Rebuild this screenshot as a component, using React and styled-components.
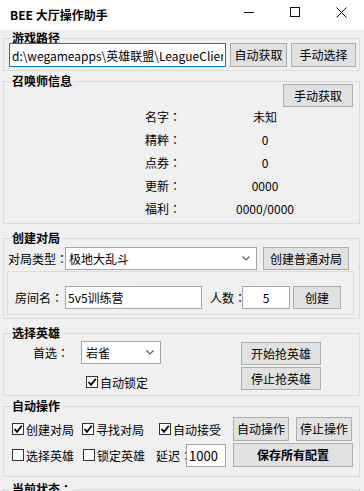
import React from 'react';
import styled, { createGlobalStyle } from 'styled-components';

const GlobalStyle = createGlobalStyle`
  html, body {
    margin: 0;
    padding: 0;
    background: #f0f0f0;
  }
  body {
    font-family: "Noto Sans CJK SC", "Noto Sans", sans-serif;
    font-size: 12px;
    color: #000;
    overflow: hidden;
  }
  * { box-sizing: border-box; }
`;

const Window = styled.div`
  width: 364px;
  height: 491px;
  overflow: hidden;
  background: #f0f0f0;
  display: flex;
  flex-direction: column;
`;

const TitleBar = styled.div`
  flex: 0 0 30px;
  height: 30px;
  background: #fff;
  display: flex;
`;

const Title = styled.div`
  flex: 1;
  padding-left: 10px;
  font-weight: bold;
  font-size: 12px;
  line-height: 30px;
`;

const Caption = styled.div`
  width: 46px;
  height: 30px;
  display: flex;
  justify-content: center;
  padding-top: 7px;
`;

const Body = styled.div`
  display: flex;
  flex-direction: column;
  padding: 0 4px 0 3px;
`;

const Group = styled.fieldset`
  margin: ${p => p.$mt}px 0 0;
  padding: 0;
  border: 1px solid #dcdcdc;
  min-width: 0;
`;

const Legend = styled.legend`
  margin-left: 6px;
  padding: 0 2px;
  height: 6px;
  line-height: 6px;
  font-size: 12px;
  font-weight: bold;
  white-space: nowrap;
`;

const Row = styled.div`
  display: flex;
  align-items: center;
  gap: ${p => p.$gap || 0}px;
  padding: ${p => p.$pad || '0'};
  justify-content: ${p => (p.$end ? 'flex-end' : 'flex-start')};
`;

const Button = styled.button`
  flex: 0 0 auto;
  width: ${p => p.$w}px;
  height: ${p => p.$h || 23}px;
  padding: 0;
  margin: 0 0 0 ${p => p.$ml || 0}px;
  background: #e1e1e1;
  border: 1px solid #adadad;
  border-radius: 0;
  font-family: inherit;
  font-size: 12px;
  font-weight: ${p => (p.$bold ? 'bold' : 'normal')};
  color: #000;
  line-height: 1;
`;

const TextBox = styled.input`
  flex: 0 0 auto;
  width: ${p => p.$w}px;
  height: ${p => p.$h || 23}px;
  margin: 0;
  padding: 0 2px;
  background: #fff;
  border: 1px solid ${p => (p.$focus ? '#0078d7' : '#a5a5a5')};
  border-radius: 0;
  outline: none;
  font-family: inherit;
  font-size: ${p => p.$fs || 12}px;
  color: #000;
  text-align: ${p => (p.$center ? 'center' : 'left')};
`;

const Combo = styled.div`
  flex: 0 0 auto;
  width: ${p => p.$w}px;
  height: 23px;
  background: #fff;
  border: 1px solid #a5a5a5;
  display: flex;
  align-items: center;
  justify-content: space-between;
  padding: 0 6px 0 ${p => p.$pl || 3}px;
  font-size: 12px;
`;

const FieldLabel = styled.span`
  flex: 0 0 auto;
  width: ${p => p.$w}px;
  margin-left: ${p => p.$ml || 0}px;
  white-space: nowrap;
  overflow: visible;
`;

/* full-width colon drawn centred in its em box, as in the original UI font */
const Colon = styled.span`
  font-family: "Noto Sans CJK JP", "Noto Sans CJK SC", sans-serif;
`;

const InfoList = styled.div`
  display: grid;
  grid-template-columns: 60px 120px;
  grid-auto-rows: 23px;
  align-items: center;
  margin-top: -2px;
  padding: 0 0 3px 141px;
`;

const InfoValue = styled.span`
  text-align: center;
`;

const Panel = styled.div`
  margin: 1px 0 3px 3px;
  width: 347px;
  height: 44px;
  border: 1px solid #dcdcdc;
  display: flex;
  align-items: center;
  padding: 13px 0 4px 7px;
`;

const Split = styled.div`
  display: flex;
  align-items: flex-start;
  padding: 5px 0 5px 0;
`;

const LeftCol = styled.div`
  width: 237px;
  display: flex;
  flex-direction: column;
`;

const RightCol = styled.div`
  display: flex;
  flex-direction: column;
  gap: 2px;
  margin-top: 1px;
`;

const AutoGrid = styled.div`
  display: grid;
  grid-template-columns: 70px 76px 75px 120px;
  grid-template-rows: 24px 24px;
  row-gap: 2px;
  align-items: center;
  padding: 8px 0 9px 8px;
`;

const CheckLabel = styled.label`
  display: flex;
  align-items: center;
  gap: 2px;
  height: 16px;
  white-space: nowrap;
  margin: ${p => p.$m || '0'};
`;

const Box = styled.span`
  width: 12px;
  height: 12px;
  flex: 0 0 12px;
  background: #fff;
  border: 1px solid #333;
  display: flex;
  align-items: center;
  justify-content: center;
`;

const Status = styled.div`
  height: 40px;
`;

const Chevron = () => (
  <svg width="8" height="5" viewBox="0 0 8 5">
    <path d="M0.5 0.5 L4 4 L7.5 0.5" fill="none" stroke="#606060" strokeWidth="1.2" />
  </svg>
);

const Check = ({ checked, children, m }) => (
  <CheckLabel $m={m}>
    <Box>
      {checked && (
        <svg width="10" height="10" viewBox="0 0 10 10">
          <path d="M1.5 5 L4 7.8 L8.8 1.8" fill="none" stroke="#000" strokeWidth="1.8" />
        </svg>
      )}
    </Box>
    {children}
  </CheckLabel>
);

const Label = ({ text, w, ml }) => (
  <FieldLabel $w={w} $ml={ml}>
    {text}
    <Colon>：</Colon>
  </FieldLabel>
);

const info = [
  ['名字', '未知'],
  ['精粹', '0'],
  ['点券', '0'],
  ['更新', '0000'],
  ['福利', '0000/0000'],
];

export default function App() {
  return (
    <Window>
      <GlobalStyle />
      <TitleBar>
        <Title>BEE 大厅操作助手</Title>
        <Caption>
          <svg width="10" height="10" viewBox="0 0 10 10">
            <path d="M0 5.5 H10" stroke="#111" strokeWidth="1" />
          </svg>
        </Caption>
        <Caption>
          <svg width="10" height="10" viewBox="0 0 10 10">
            <rect x="0.5" y="0.5" width="9" height="9" fill="none" stroke="#111" strokeWidth="1" />
          </svg>
        </Caption>
        <Caption>
          <svg width="11" height="11" viewBox="0 0 11 11">
            <path d="M0.5 0.5 L10.5 10.5 M10.5 0.5 L0.5 10.5" stroke="#111" strokeWidth="1" />
          </svg>
        </Caption>
      </TitleBar>

      <Body>
        <Group $mt={5}>
          <Legend>游戏路径</Legend>
          <Row $gap={4} $pad="2px 0 3px 5px">
            <TextBox $w={217} $h={24} $focus readOnly defaultValue="d:\wegameapps\英雄联盟\LeagueClient" />
            <Button $w={57} $h={24}>自动获取</Button>
            <Button $w={65} $h={24}>手动选择</Button>
          </Row>
        </Group>

        <Group $mt={7}>
          <Legend>召唤师信息</Legend>
          <Row $end $pad="0 6px 0 0">
            <Button $w={70}>手动获取</Button>
          </Row>
          <InfoList>
            {info.map(([k, v]) => (
              <React.Fragment key={k}>
                <span>
                  {k}
                  <Colon>：</Colon>
                </span>
                <InfoValue>{v}</InfoValue>
              </React.Fragment>
            ))}
          </InfoList>
        </Group>

        <Group $mt={11}>
          <Legend>创建对局</Legend>
          <Row $pad="6px 0 0 4px">
            <Label text="对局类型" w={57} />
            <Combo $w={192}>
              极地大乱斗
              <Chevron />
            </Combo>
            <Button $w={86} $ml={6}>创建普通对局</Button>
          </Row>
          <Panel>
            <Label text="房间名" w={50} />
            <TextBox $w={137} readOnly defaultValue="5v5训练营" />
            <Label text="人数" w={32} ml={8} />
            <TextBox $w={48} $center readOnly defaultValue="5" />
            <Button $w={48} $ml={3}>创建</Button>
          </Panel>
        </Group>

        <Group $mt={11}>
          <Legend>选择英雄</Legend>
          <Split>
            <LeftCol>
              <Row $pad="0 0 0 29px">
                <Label text="首选" w={48} />
                <Combo $w={80} $pl={4}>
                  岩雀
                  <Chevron />
                </Combo>
              </Row>
              <Check checked m="10px 0 0 82px">自动锁定</Check>
            </LeftCol>
            <RightCol>
              <Button $w={80}>开始抢英雄</Button>
              <Button $w={80}>停止抢英雄</Button>
            </RightCol>
          </Split>
        </Group>

        <Group $mt={7}>
          <Legend>自动操作</Legend>
          <AutoGrid>
            <Check checked>创建对局</Check>
            <Check checked>寻找对局</Check>
            <Check checked m="0 0 0 1px">自动接受</Check>
            <Row $gap={7}>
              <Button $w={56} $h={24}>自动操作</Button>
              <Button $w={56} $h={24}>停止操作</Button>
            </Row>
            <Check>选择英雄</Check>
            <Check m="0 0 0 1px">锁定英雄</Check>
            <Row $pad="0 0 0 0" style={{ marginLeft: -2 }}>
              <Label text="延迟" w={30} />
              <TextBox $w={40} $fs={13} readOnly defaultValue="1000" />
            </Row>
            <Button $w={120} $h={24} $bold>保存所有配置</Button>
          </AutoGrid>
        </Group>

        <Group $mt={9}>
          <Legend>
            当前状态<Colon>：</Colon>
          </Legend>
          <Status />
        </Group>
      </Body>
    </Window>
  );
}
